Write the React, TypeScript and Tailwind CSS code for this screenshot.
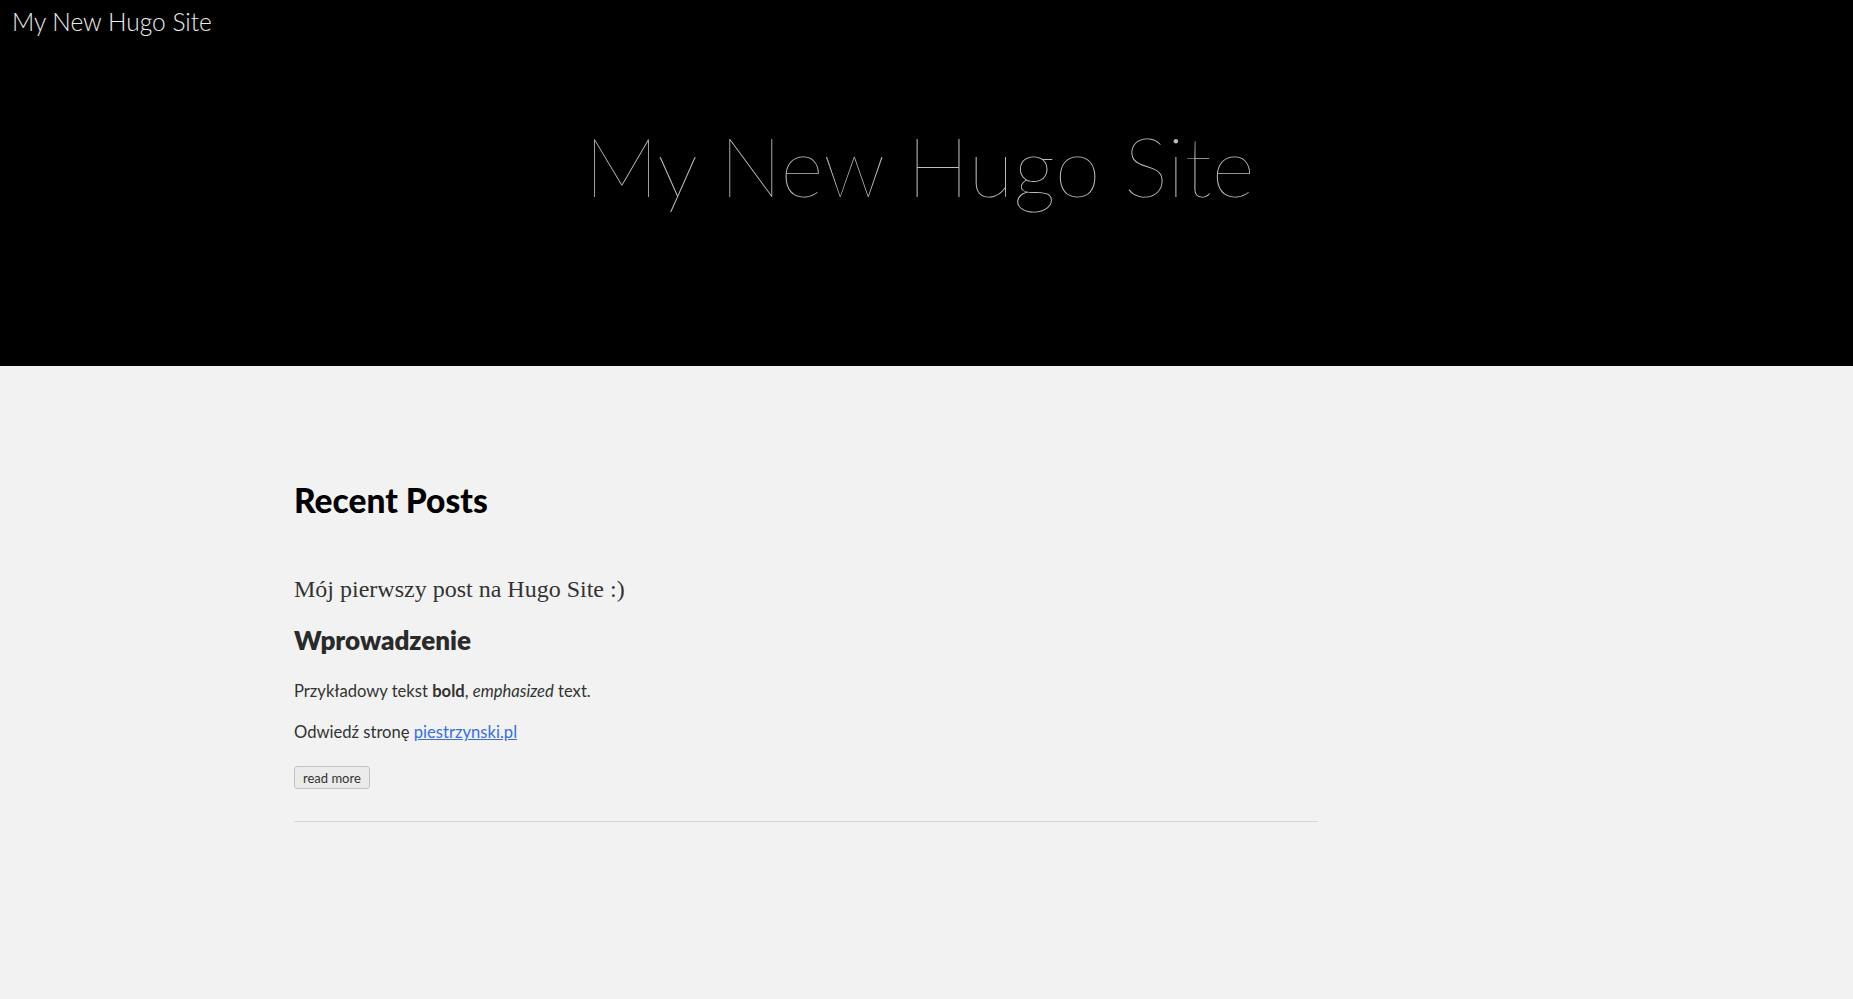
import React from "react";

const sans = "font-['Lato','Open_Sans',sans-serif]";

function Header() {
  return (
    <header className="h-[366px] bg-black">
      <div className="px-[12px] pt-[7px] text-[24.5px] leading-[30px] font-light text-[#ececec]">
        My New Hugo Site
      </div>
      <h1 className="mt-[78px] pr-[14px] text-center text-[83px] leading-[100px] font-thin text-[#bdbdbd]">
        My New Hugo Site
      </h1>
    </header>
  );
}

function Post() {
  return (
    <article className="border-b border-[#d6d6d6] pb-[32px]">
      <h2 className="font-['Liberation_Serif',serif] text-[24px] leading-[30px] text-[#333]">
        Mój pierwszy post na Hugo Site :)
      </h2>
      <h3 className="mt-[21px] text-[26px] leading-[30px] font-extrabold text-[#2a2a2a]">
        Wprowadzenie
      </h3>
      <p className="mt-[24px] text-[16.6px] leading-[24px] text-[#333]">
        Przykładowy tekst <strong className="font-bold">bold</strong>,{" "}
        <em>emphasized</em> text.
      </p>
      <p className="mt-[17px] text-[16.6px] leading-[24px] text-[#333]">
        Odwiedź stronę{" "}
        <a href="#" className="text-[#3b6fd8] underline">
          piestrzynski.pl
        </a>
      </p>
      <button className="mt-[22px] h-[23px] rounded-[3px] border border-[#c4c4c4] bg-[#ebebeb] px-[8px] text-[13px] leading-[20px] text-[#333]">
        read more
      </button>
    </article>
  );
}

export default function App() {
  return (
    <div className={`min-h-[999px] bg-[#f2f2f2] ${sans}`}>
      <Header />
      <main className="mx-auto w-[1265px] pt-[114px]">
        <div className="w-[1024px]">
          <h1 className="text-[33.5px] leading-[40px] font-black text-black">Recent Posts</h1>
          <div className="mt-[54px]">
            <Post />
          </div>
        </div>
      </main>
    </div>
  );
}
